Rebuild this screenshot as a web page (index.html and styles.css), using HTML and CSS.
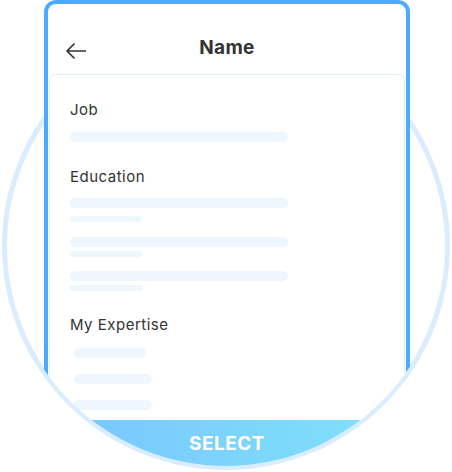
FILE: index.html
```html
<!DOCTYPE html>
<html lang="en">
<head>
    <meta charset="UTF-8">
    <title>Name</title>
    <link rel="stylesheet" href="styles.css">
</head>
<body>
    <div class="stage">
        <div class="ring"></div>
        <div class="phone">
            <div class="header">
                <svg class="back" width="20" height="16" viewBox="0 0 20 16" aria-label="Back">
                    <path d="M1 8 H20 M8 1 L1 8 L8 15" fill="none" stroke="#333" stroke-width="1.7" stroke-linecap="round" stroke-linejoin="round"/>
                </svg>
                <h1 class="title">Name</h1>
                <span></span>
            </div>
            <div class="card">
                <div class="section">
                    <p class="label">Job</p>
                    <span class="bar long job-bar"></span>
                </div>
                <div class="section edu">
                    <p class="label">Education</p>
                    <span class="bar long e1"></span>
                    <span class="bar short s1"></span>
                    <span class="bar long e2"></span>
                    <span class="bar short s2"></span>
                    <span class="bar long e2b"></span>
                    <span class="bar short s2"></span>
                </div>
                <div class="section exp">
                    <p class="label">My Expertise</p>
                    <span class="bar chip x1"></span>
                    <span class="bar chip x2"></span>
                    <span class="bar chip x2"></span>
                </div>
            </div>
            <button class="select">SELECT</button>
        </div>
    </div>
</body>
</html>
```

FILE: styles.css
```css
body {
    margin: 0;
    font-family: 'Inter', 'Noto Sans', sans-serif;
    color: #333;
    background: #fff;
}

.stage {
    position: relative;
    width: 452px;
    height: 472px;
    overflow: hidden;
}

/* light ring behind the phone, shows where the phone is cut round */
.ring {
    position: absolute;
    left: 2px;
    top: 22px;
    width: 448px;
    height: 448px;
    box-sizing: border-box;
    border: 5px solid #daedff;
    border-radius: 50%;
    z-index: 0;
}

.phone {
    position: relative;
    z-index: 1;
    margin-left: 44px;
    width: 366px;
    height: 472px;
    box-sizing: border-box;
    border: 4px solid #4aabff;
    border-bottom: none;
    border-radius: 12px 12px 0 0;
    display: flex;
    flex-direction: column;
    background: #fff;
    clip-path: path('M 0 0 H 366 V 246 H 402 A 220 220 0 0 1 -38 246 H 0 Z');
}

.header {
    flex: none;
    height: 70px;
    box-sizing: border-box;
    display: grid;
    grid-template-columns: 40px 1fr 40px;
    align-items: center;
    align-content: start;
    padding: 32px 18px 0;
}

.back {
    display: block;
    margin-top: 5px;
}

.title {
    margin: 0;
    font-size: 19px;
    line-height: 24px;
    font-weight: 700;
    text-align: center;
    letter-spacing: 0.3px;
}

.card {
    flex: 1;
    margin: 0 1px;
    border: 1px solid #dcedfd;
    border-bottom: none;
    border-radius: 6px 6px 0 0;
    padding: 25px 20px 0;
    overflow: hidden;
}

.label {
    margin: 0;
    font-size: 15px;
    line-height: 20px;
    letter-spacing: 0.5px;
}

.bar {
    display: block;
    background: #eef6fe;
}

.long {
    width: 218px;
    height: 10px;
    border-radius: 5px;
}

.short {
    width: 72px;
    height: 6px;
    border-radius: 3px;
}

.chip {
    height: 10px;
    border-radius: 5px;
    margin-left: 4px;
    margin-top: 16px;
}

.job-bar { margin-top: 12px; }

.edu { margin-top: 25px; }
.e1 { margin-top: 11px; }
.s1 { margin-top: 8px; }
.e2 { margin-top: 15px; }
.e2b { margin-top: 14px; }
.s2 { margin-top: 4px; }

.exp { margin-top: 24px; }
.exp .x1 { margin-top: 13px; width: 72px; }
.x2 { width: 78px; }

.select {
    flex: none;
    height: 52px;
    border: none;
    padding: 0 0 6px;
    margin: 0 -4px;
    background: linear-gradient(90deg, #78c4ff 0%, #80e4f8 100%);
    color: #fff;
    font-family: 'Inter', 'Noto Sans', sans-serif;
    font-size: 19px;
    font-weight: 700;
    letter-spacing: 0.5px;
}
```
